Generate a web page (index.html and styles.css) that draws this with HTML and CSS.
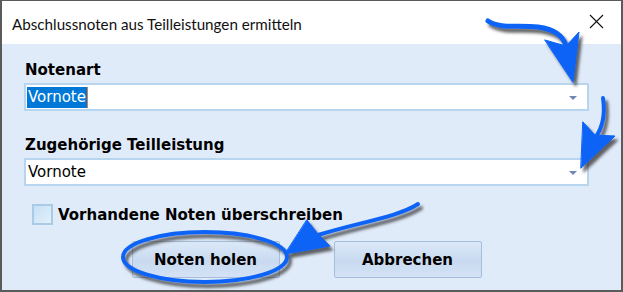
FILE: index.html
```html
<!DOCTYPE html>
<html lang="de">
  <head>
    <meta charset="UTF-8" />
    <title>Abschlussnoten aus Teilleistungen ermitteln</title>
    <link rel="stylesheet" href="styles.css">
  </head>
  <body>
    <div class="window">
      <div class="titlebar">
        <span class="title">Abschlussnoten aus Teilleistungen ermitteln</span>
        <span class="close">
          <svg width="15" height="15" viewBox="0 0 15 15">
            <path d="M1 1 L14 14 M14 1 L1 14" stroke="#111" stroke-width="1.1" />
          </svg>
        </span>
      </div>

      <div class="content">
        <label class="field-label">Notenart</label>
        <div class="combo">
          <span class="value selected">Vornote</span>
          <span class="drop"></span>
        </div>

        <label class="field-label second">Zugehörige Teilleistung</label>
        <div class="combo">
          <span class="value">Vornote</span>
          <span class="drop"></span>
        </div>

        <div class="check-row">
          <span class="checkbox"></span>
          <span class="check-label">Vorhandene Noten überschreiben</span>
        </div>

        <div class="buttons">
          <button class="btn">Noten holen</button>
          <button class="btn">Abbrechen</button>
        </div>
      </div>

      <!-- annotation arrows drawn over the dialog -->
      <svg class="marks" width="623" height="292" viewBox="0 0 623 292">
        <defs>
          <filter id="shadow" x="-20%" y="-20%" width="150%" height="150%">
            <feDropShadow dx="3" dy="4" stdDeviation="1.8" flood-color="#333" flood-opacity="0.75" />
          </filter>
        </defs>
        <g filter="url(#shadow)" fill="#0a64f5" stroke="#0a64f5" stroke-linecap="round">
          <path d="M488 21 C500 29 518 25 538 27 C553 29 563 35 566 46" fill="none" stroke-width="5" />
          <polygon points="545,40 566,46 579,32 573,82" stroke-width="1" stroke-linejoin="round" />

          <path d="M603 98 C605 112 604 126 595 138" fill="none" stroke-width="4" />
          <polygon points="583,122 595,135 615,136 581,168" stroke-width="1" stroke-linejoin="round" />

          <path d="M418 204 C398 217 360 222 318 235" fill="none" stroke-width="4" />
          <polygon points="307,220 318,234 330,246 285,254" stroke-width="1" stroke-linejoin="round" />

          <ellipse cx="205" cy="257" rx="82" ry="25" fill="none" stroke-width="4" />
        </g>
      </svg>
    </div>
  </body>
</html>
```

FILE: styles.css
```css
body {
  margin: 0;
  background-color: #ffffff;
  font-family: "DejaVu Sans", Verdana, sans-serif;
}

.window {
  position: relative;
  width: 619px;
  height: 289px;
  border: 2px solid #5b5b5b;
  border-top-width: 1px;
  background-color: #e0ebfa;
}

.titlebar {
  display: flex;
  align-items: center;
  justify-content: space-between;
  height: 43px;
  padding: 0 17px 0 10px;
  background-color: #ffffff;
}
.title {
  font-family: Lato, "Liberation Sans", sans-serif;
  font-size: 15.2px;
  color: #111;
  margin-top: 2px;
}
.close {
  display: flex;
  margin-top: -2px;
}

.content {
  padding: 17px 32px 0 22px;
}

.field-label {
  display: block;
  font-size: 15px;
  font-weight: bold;
  line-height: 18px;
  color: #000;
  margin: 0 0 4px 1px;
}
.field-label.second {
  margin-top: 25px;
}

.combo {
  display: flex;
  align-items: center;
  justify-content: space-between;
  height: 24px;
  border: 2px solid #b8d5ef;
  background-color: #ffffff;
  padding: 0 10px 0 1px;
}
.value {
  font-size: 15px;
  line-height: 21px;
  padding: 0 1px;
  color: #000;
}
.value.selected {
  background-color: #0078d7;
  color: #ffffff;
  border-right: 1px solid #e8793a;
}
.drop {
  width: 0;
  height: 0;
  border-left: 4px solid transparent;
  border-right: 4px solid transparent;
  border-top: 4px solid #6e88b3;
  margin-top: 2px;
}

.check-row {
  display: flex;
  align-items: center;
  margin: 18px 0 0 8px;
}
.checkbox {
  width: 17px;
  height: 17px;
  border: 2px solid #a9cbe6;
  background: linear-gradient(135deg, #c5e0f4, #e3f0fb);
}
.check-label {
  margin-left: 5px;
  font-size: 15px;
  font-weight: bold;
  color: #000;
}

.buttons {
  display: flex;
  justify-content: center;
  gap: 54px;
  margin-top: 16px;
}
.btn {
  width: 148px;
  height: 37px;
  border: 1px solid #a6bedb;
  border-radius: 2px;
  background: linear-gradient(#dbe8f8, #c9daf0 55%, #d3e2f5);
  font-family: "DejaVu Sans", Verdana, sans-serif;
  font-size: 15px;
  font-weight: bold;
  color: #000;
}

.marks {
  position: absolute;
  left: -2px;
  top: -1px;
  pointer-events: none;
}
```
